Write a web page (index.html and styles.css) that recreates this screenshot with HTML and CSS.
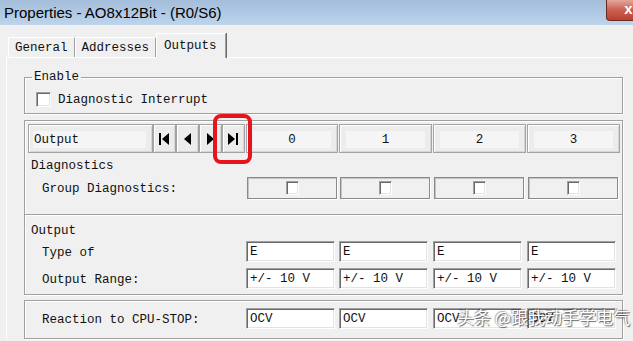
FILE: index.html
```html
<!DOCTYPE html>
<html lang="en">
<head>
    <meta charset="UTF-8">
    <meta name="viewport" content="width=device-width, initial-scale=1.0">
    <title>Properties - AO8x12Bit - (R0/S6)</title>
    <link rel="stylesheet" href="styles.css">
</head>
<body>
    <div class="window">
        <div class="titlebar">
            <span class="title">Properties - AO8x12Bit - (R0/S6)</span>
            <span class="close-btn">x</span>
        </div>

        <div class="tabs">
            <div class="tab">General</div>
            <div class="tab">Addresses</div>
            <div class="tab active">Outputs</div>
        </div>

        <div class="panel">
            <!-- Enable -->
            <fieldset class="group">
                <legend>Enable</legend>
                <div class="check-line">
                    <span class="checkbox"></span>
                    <span>Diagnostic Interrupt</span>
                </div>
            </fieldset>

            <!-- 通道表 -->
            <div class="box">
                <div class="grid-row header">
                    <div class="label-head">
                        <div class="btn btn-output"><span class="btn-face">Output</span></div>
                        <div class="btn nav-btn">
                            <svg width="11" height="12" viewBox="0 0 11 12"><rect x="0" y="0" width="2" height="12"/><path d="M10 0 L3 6 L10 12 Z"/></svg>
                        </div>
                        <div class="btn nav-btn">
                            <svg width="7" height="12" viewBox="0 0 7 12"><path d="M7 0 L0 6 L7 12 Z"/></svg>
                        </div>
                        <div class="btn nav-btn">
                            <svg width="7" height="12" viewBox="0 0 7 12"><path d="M0 0 L7 6 L0 12 Z"/></svg>
                        </div>
                        <div class="btn nav-btn">
                            <svg width="11" height="12" viewBox="0 0 11 12"><path d="M0 0 L7 6 L0 12 Z"/><rect x="8" y="0" width="2" height="12"/></svg>
                        </div>
                    </div>
                    <div class="btn col-head"><span class="btn-face">0</span></div>
                    <div class="btn col-head"><span class="btn-face">1</span></div>
                    <div class="btn col-head"><span class="btn-face">2</span></div>
                    <div class="btn col-head"><span class="btn-face">3</span></div>
                </div>

                <div class="section diag">
                    <div class="sec-title">Diagnostics</div>
                    <div class="grid-row cells">
                        <div class="row-label">Group Diagnostics:</div>
                        <div class="cell"><span class="checkbox small"></span></div>
                        <div class="cell"><span class="checkbox small"></span></div>
                        <div class="cell"><span class="checkbox small"></span></div>
                        <div class="cell"><span class="checkbox small"></span></div>
                    </div>
                </div>

                <div class="section output">
                    <div class="sec-title">Output</div>
                    <div class="grid-row fields first">
                        <div class="row-label">Type of</div>
                        <div class="field">E</div>
                        <div class="field">E</div>
                        <div class="field">E</div>
                        <div class="field">E</div>
                    </div>
                    <div class="grid-row fields">
                        <div class="row-label">Output Range:</div>
                        <div class="field">+/- 10 V</div>
                        <div class="field">+/- 10 V</div>
                        <div class="field">+/- 10 V</div>
                        <div class="field">+/- 10 V</div>
                    </div>
                </div>
            </div>

            <div class="box reaction">
                <div class="grid-row fields">
                    <div class="row-label">Reaction to CPU-STOP:</div>
                    <div class="field">OCV</div>
                    <div class="field">OCV</div>
                    <div class="field">OCV</div>
                    <div class="field">OCV</div>
                </div>
            </div>
        </div>

        <!-- 标注框和水印 -->
        <div class="highlight"></div>
        <div class="watermark">头条 @跟我动手学电气</div>
    </div>
</body>
</html>
```

FILE: styles.css
```css
body {
    margin: 0;
    background: #f0f0f0;
    font-family: "Liberation Mono", monospace;
    font-size: 12.5px;
    color: #111;
}

.window {
    position: relative;
    width: 633px;
    height: 341px;
    overflow: hidden;
}

/* 标题栏 */
.titlebar {
    height: 25px;
    display: flex;
    align-items: flex-start;
    background: linear-gradient(#a3bddb, #bdd4eb);
}

.title {
    font-family: "Liberation Sans", sans-serif;
    font-size: 15px;
    line-height: 25px;
    padding-left: 4px;
    color: #000;
}

.close-btn {
    margin-left: auto;
    margin-right: -18px;
    width: 43px;
    height: 20px;
    border: 1px solid #6a2a22;
    border-top: none;
    border-radius: 0 0 4px 4px;
    background: linear-gradient(#e3a69b, #cc5f50 50%, #b9402f);
    color: #fff;
    font: bold 15px "Liberation Sans", sans-serif;
    line-height: 18px;
    text-align: center;
}

/* 选项卡 */
.tabs {
    display: flex;
    align-items: flex-end;
    height: 32px;
    padding-left: 8px;
}

.tab {
    box-sizing: border-box;
    height: 20px;
    padding: 2px 6px 0;
    border: 1px solid;
    border-color: #fff #a0a0a0 transparent #fff;
    border-bottom: none;
    line-height: 17px;
}

.tab.active {
    position: relative;
    z-index: 1;
    height: 25px;
    padding: 3px 8px 0 7px;
    margin-bottom: -1px;
    background: #f0f0f0;
    line-height: 19px;
    box-shadow: 1px 0 0 #696969;
}

.panel {
    border-top: 1px solid #fff;
    border-left: 1px solid #fff;
    margin-left: 6px;
    padding: 11px 0 0 17px;
}

/* Enable 分组 */
.group {
    width: 599px;
    box-sizing: border-box;
    margin: 0;
    padding: 6px 0 6px 11px;
    border: 1px solid #a0a0a0;
    box-shadow: inset 1px 1px 0 #fff, 1px 1px 0 #fff;
}

.group legend {
    margin-left: -4px;
    padding: 0 2px;
    line-height: 16px;
}

.check-line {
    display: flex;
    align-items: center;
    gap: 7px;
    height: 16px;
}

.check-line span:last-child {
    padding-top: 2px;
}

.checkbox {
    display: inline-block;
    width: 15px;
    height: 15px;
    box-sizing: border-box;
    background: #fff;
    border: 1px solid;
    border-color: #a0a0a0 #fff #fff #a0a0a0;
    box-shadow: inset 1px 1px 0 #696969, inset -1px -1px 0 #e3e3e3;
}

.checkbox.small {
    width: 13px;
    height: 14px;
}

/* 表格框 */
.box {
    width: 599px;
    box-sizing: border-box;
    margin-top: 6px;
    padding-top: 3px;
    border: 1px solid #a0a0a0;
    box-shadow: inset 1px 1px 0 #fff, 1px 1px 0 #fff;
}

.grid-row {
    display: grid;
    grid-template-columns: 221px 93px 94px 94px 94px;
    align-items: center;
}

.label-head {
    display: flex;
    padding-left: 3px;
}

.btn {
    box-sizing: border-box;
    height: 29px;
    display: flex;
    align-items: center;
    justify-content: center;
    background: #ececec;
    border: 1px solid #a3a3a3;
    box-shadow: inset 1px 1px 0 #fff, inset -1px -1px 0 #d6d6d6;
}

.btn-face {
    flex: 1;
    margin: 1px 6px 0;
    height: 17px;
    line-height: 19px;
    background: #f5f5f5;
    text-align: center;
}

.btn-output {
    width: 125px;
}

.btn-output .btn-face {
    text-align: left;
    padding-left: 1px;
    margin-left: 4px;
}

.nav-btn {
    width: 23px;
}

.nav-btn svg {
    fill: #000;
    margin-top: 1px;
}

.col-head {
    margin-right: 1px;
}

.sec-title {
    padding-left: 6px;
    padding-top: 1px;
    line-height: 14px;
}

.row-label {
    padding-left: 17px;
    padding-top: 2px;
}

.section.diag {
    padding: 5px 0 15px;
}

.cells {
    margin-top: 4px;
}

.cell {
    box-sizing: border-box;
    width: 90px;
    height: 22px;
    margin-left: 1px;
    display: flex;
    align-items: center;
    justify-content: center;
    border: 1px solid #8a8a8a;
    box-shadow: inset 1px 1px 0 #c4c4c4, 1px 1px 0 #fff;
}

.section.output {
    border-top: 1px solid #a0a0a0;
    box-shadow: inset 0 1px 0 #fff;
    padding: 8px 0 5px;
}

.fields.first {
    margin-top: 3px;
}

.fields + .fields {
    margin-top: 6px;
}

.field {
    box-sizing: border-box;
    width: 89px;
    height: 21px;
    padding-left: 3px;
    padding-top: 2px;
    line-height: 17px;
    background: #fff;
    border: 1px solid;
    border-color: #a0a0a0 #fff #fff #a0a0a0;
    box-shadow: inset 1px 1px 0 #696969, inset -1px -1px 0 #e3e3e3;
    white-space: pre;
}

.box.reaction {
    margin-top: 5px;
    padding: 7px 0 9px;
}

/* 标注 */
.highlight {
    position: absolute;
    left: 213px;
    top: 114px;
    width: 39px;
    height: 50px;
    box-sizing: border-box;
    border: 4px solid #e8141c;
    border-radius: 8px;
}

.watermark {
    position: absolute;
    left: 457px;
    top: 304px;
    font-family: "Noto Sans CJK SC", sans-serif;
    font-size: 17px;
    line-height: 26px;
    color: #fff;
    text-shadow: 1px 1px 1px rgba(0,0,0,0.6), -1px -1px 1px rgba(0,0,0,0.35);
    white-space: nowrap;
}
```
